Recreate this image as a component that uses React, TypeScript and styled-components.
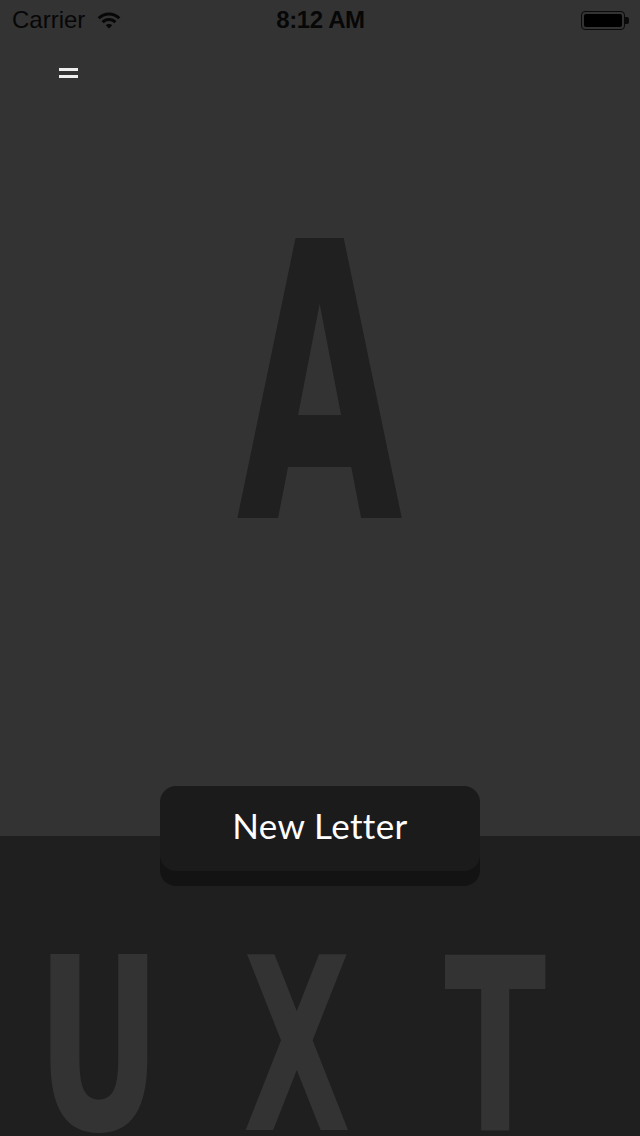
import React from "react";
import styled, { createGlobalStyle } from "styled-components";

const Global = createGlobalStyle`
  html, body { margin: 0; padding: 0; background: #333333; }
  * { box-sizing: border-box; }
`;

const Page = styled.div`
  width: 640px;
  height: 1136px;
  overflow: hidden;
  display: flex;
  flex-direction: column;
  font-family: "Liberation Sans", Arial, sans-serif;
`;

const TopSection = styled.section`
  height: 836px;
  flex: none;
  background: #333333;
  display: flex;
  flex-direction: column;
`;

const StatusBar = styled.div`
  height: 40px;
  display: grid;
  grid-template-columns: 1fr auto 1fr;
  align-items: center;
  padding: 0 11px 0 12px;
  color: #070707;
  font-size: 24px;
  line-height: 40px;
`;

const StatusLeft = styled.div`
  display: flex;
  align-items: center;
  gap: 12px;
`;

const Time = styled.div`
  font-weight: 700;
  letter-spacing: -0.4px;
`;

const StatusRight = styled.div`
  display: flex;
  justify-content: flex-end;
  align-items: center;
`;

const BatteryBody = styled.div`
  width: 44px;
  height: 19px;
  border: 1px solid #0a0a0a;
  border-radius: 4px;
  padding: 2px;
  display: flex;
`;

const BatteryFill = styled.div`
  flex: 1;
  background: #000;
  border-radius: 2px;
`;

const BatteryNub = styled.div`
  width: 4px;
  height: 7px;
  background: #0a0a0a;
  border-radius: 0 2px 2px 0;
`;

const NavBar = styled.div`
  height: 60px;
  padding: 28px 0 0 59px;
`;

const MenuButton = styled.div`
  width: 19px;
  display: flex;
  flex-direction: column;
  gap: 4px;
`;

const MenuBar = styled.div`
  height: 3px;
  background: #eeeeee;
`;

const Hero = styled.div`
  padding-top: 146px;
  display: flex;
  justify-content: center;
`;

const GlyphCell = styled.div<{ $w: number }>`
  width: ${(p) => p.$w}px;
  display: flex;
  justify-content: center;
`;

const Glyph = styled.span<{ $size: number; $sx: number; $color: string }>`
  display: block;
  font-family: "DejaVu Sans", "Liberation Sans", sans-serif;
  font-weight: 700;
  font-size: ${(p) => p.$size}px;
  line-height: 0.73;
  color: ${(p) => p.$color};
  transform: scaleX(${(p) => p.$sx});
  transform-origin: center;
  white-space: nowrap;
`;

const BottomSection = styled.section`
  flex: 1;
  background: #1f1f1f;
  display: flex;
  flex-direction: column;
  align-items: stretch;
`;

const ButtonWrap = styled.div`
  display: flex;
  justify-content: center;
  margin-top: -50px;
`;

const NewLetterButton = styled.button`
  width: 320px;
  height: 85px;
  border: none;
  border-radius: 16px;
  background: #1b1b1b;
  box-shadow: 0 15px 0 #131313;
  color: #ffffff;
  font-family: Lato, "Open Sans", sans-serif;
  font-size: 35px;
  font-weight: 400;
  letter-spacing: 0.4px;
  padding: 0 0 8px 0;
  cursor: pointer;
`;

const LetterRow = styled.div`
  margin-top: 88px;
  padding-left: 48px;
  display: flex;
  gap: 96px;
`;

const WifiIcon = () => (
  <svg width="24" height="17" viewBox="0 0 24 17">
    <path d="M12 16.5 L8.8 13.3 A4.5 4.5 0 0 1 15.2 13.3 Z" fill="#070707" />
    <path
      d="M5.6 10.1 A9 9 0 0 1 18.4 10.1"
      fill="none"
      stroke="#070707"
      strokeWidth="3"
    />
    <path
      d="M1.7 6.2 A14.5 14.5 0 0 1 22.3 6.2"
      fill="none"
      stroke="#070707"
      strokeWidth="3"
    />
  </svg>
);

const bottomLetters = [
  { ch: "U", sx: 0.64 },
  { ch: "X", sx: 0.58 },
  { ch: "T", sx: 0.62 },
];

export default function App() {
  return (
    <>
      <Global />
      <Page>
        <TopSection>
          <StatusBar>
            <StatusLeft>
              <span>Carrier</span>
              <WifiIcon />
            </StatusLeft>
            <Time>8:12 AM</Time>
            <StatusRight>
              <BatteryBody>
                <BatteryFill />
              </BatteryBody>
              <BatteryNub />
            </StatusRight>
          </StatusBar>
          <NavBar>
            <MenuButton>
              <MenuBar />
              <MenuBar />
            </MenuButton>
          </NavBar>
          <Hero>
            <GlyphCell $w={160}>
              <Glyph $size={384} $sx={0.56} $color="#202020">
                A
              </Glyph>
            </GlyphCell>
          </Hero>
        </TopSection>
        <BottomSection>
          <ButtonWrap>
            <NewLetterButton>New Letter</NewLetterButton>
          </ButtonWrap>
          <LetterRow>
            {bottomLetters.map((l) => (
              <GlyphCell key={l.ch} $w={102}>
                <Glyph $size={241} $sx={l.sx} $color="#333333">
                  {l.ch}
                </Glyph>
              </GlyphCell>
            ))}
          </LetterRow>
        </BottomSection>
      </Page>
    </>
  );
}
